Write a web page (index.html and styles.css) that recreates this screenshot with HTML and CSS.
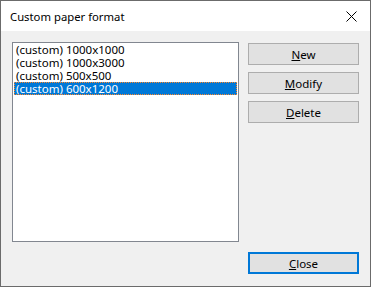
FILE: index.html
```html
<!DOCTYPE html>
<html lang="en">
<head>
    <meta charset="UTF-8">
    <title>Custom paper format</title>
    <link rel="stylesheet" href="styles.css">
</head>
<body>

    <!-- Dialog window -->
    <div class="dialog">
        <div class="titlebar">
            <span class="title">Custom paper format</span>
            <span class="close-x">
                <svg width="11" height="11" viewBox="0 0 11 11">
                    <path d="M0.5 0.5 L10.5 10.5 M10.5 0.5 L0.5 10.5" stroke="#000" stroke-width="1" fill="none"/>
                </svg>
            </span>
        </div>

        <div class="body">
            <div class="main">
                <ul class="listbox">
                    <li>(custom) 1000x1000</li>
                    <li>(custom) 1000x3000</li>
                    <li>(custom) 500x500</li>
                    <li class="selected">(custom) 600x1200</li>
                </ul>

                <div class="actions">
                    <button class="btn"><u>N</u>ew</button>
                    <button class="btn"><u>M</u>odify</button>
                    <button class="btn"><u>D</u>elete</button>
                </div>
            </div>

            <div class="footer">
                <button class="btn default"><u>C</u>lose</button>
            </div>
        </div>
    </div>

</body>
</html>
```

FILE: styles.css
```css
/* Reset */
* {
    margin: 0;
    padding: 0;
    box-sizing: border-box;
}

body {
    font-family: "Noto Sans", "Open Sans", sans-serif;
    font-size: 11.5px;
    color: #000;
    background-color: #f0f0f0;
}

/* Window frame */
.dialog {
    width: 371px;
    height: 287px;
    border: 1px solid #6b6b6b;
    background-color: #f0f0f0;
    display: flex;
    flex-direction: column;
}

.titlebar {
    height: 30px;
    background-color: #fff;
    display: flex;
    align-items: center;
    justify-content: space-between;
    padding: 0 10px 0 9px;
}

.title {
    font-size: 11.3px;
}

.close-x {
    display: flex;
    margin-right: 3px;
}

/* Dialog content */
.body {
    flex: 1;
    padding: 11px;
    display: flex;
    flex-direction: column;
}

.main {
    display: flex;
    gap: 9px;
}

.listbox {
    list-style: none;
    width: 227px;
    height: 200px;
    background-color: #fff;
    border: 1px solid #828790;
    padding: 0 1px;
}

.listbox li {
    height: 13px;
    line-height: 13px;
    padding-left: 2px;
    white-space: nowrap;
}

.listbox li.selected {
    background-color: #0078d7;
    color: #fff;
    outline: 1px dotted #ff8728;
    outline-offset: -1px;
}

/* Buttons */
.actions {
    display: flex;
    flex-direction: column;
    gap: 7px;
    padding-top: 1px;
}

.btn {
    width: 111px;
    height: 22px;
    background-color: #e1e1e1;
    border: 1px solid #adadad;
    font-family: inherit;
    font-size: 11.5px;
    color: #000;
}

.btn.default {
    border: 2px solid #0078d7;
}

.footer {
    margin-top: auto;
    display: flex;
    justify-content: flex-end;
    padding-bottom: 1px;
}
```
